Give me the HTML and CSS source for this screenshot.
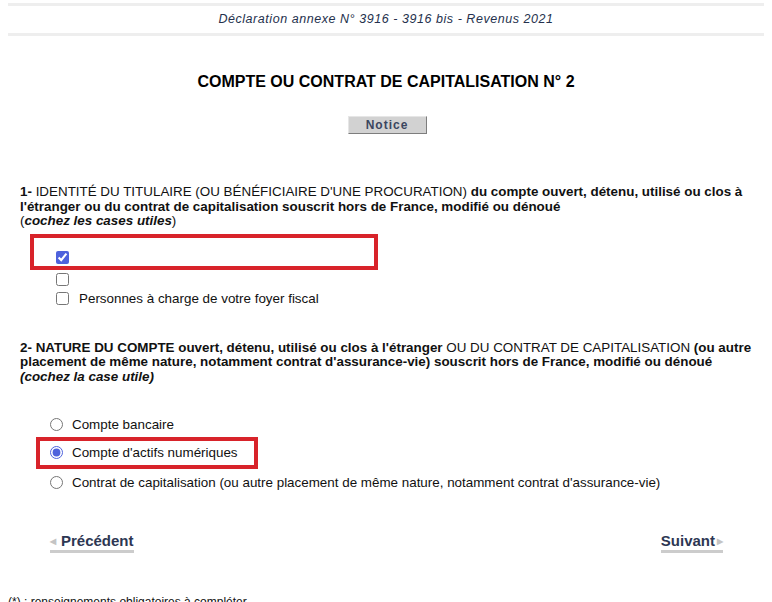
FILE: index.html
```html
<!DOCTYPE html>
<html lang="fr">
<head>
    <meta charset="UTF-8">
    <title>Déclaration annexe 3916</title>
    <link rel="stylesheet" href="styles.css">
</head>
<body>
    <div class="banner">Déclaration annexe N° 3916 - 3916 bis - Revenus 2021</div>

    <h1 class="title">COMPTE OU CONTRAT DE CAPITALISATION N° 2</h1>

    <div class="notice-wrap">
        <button class="notice">Notice</button>
    </div>

    <div class="section">
        <p class="question">
            <b>1-</b> IDENTITÉ DU TITULAIRE (OU BÉNÉFICIAIRE D'UNE PROCURATION) <b>du compte ouvert, détenu, utilisé ou clos à l'étranger ou du contrat de capitalisation souscrit hors de France, modifié ou dénoué</b><br>
            (<b><i>cochez les cases utiles</i></b>)
        </p>
        <div class="checks">
            <div class="highlight hl-check">
                <label class="row"><input type="checkbox" checked></label>
            </div>
            <label class="row"><input type="checkbox"></label>
            <label class="row"><input type="checkbox"> Personnes à charge de votre foyer fiscal</label>
        </div>
    </div>

    <div class="section section-2">
        <p class="question">
            <b>2- NATURE DU COMPTE ouvert, détenu, utilisé ou clos à l'étranger</b> OU DU CONTRAT DE CAPITALISATION <b>(ou autre placement de même nature, notamment contrat d'assurance-vie) souscrit hors de France, modifié ou dénoué</b><br>
            <b><i>(cochez la case utile)</i></b>
        </p>
        <div class="radios">
            <label class="row"><input type="radio" name="nature"> Compte bancaire</label>
            <div class="highlight hl-radio">
                <label class="row"><input type="radio" name="nature" checked> Compte d'actifs numériques</label>
            </div>
            <label class="row"><input type="radio" name="nature"> Contrat de capitalisation (ou autre placement de même nature, notamment contrat d'assurance-vie)</label>
        </div>
    </div>

    <div class="nav">
        <a href="#" class="nav-link prev"><span class="arrow">&#9664;</span>Précédent</a>
        <a href="#" class="nav-link next">Suivant<span class="arrow">&#9654;</span></a>
    </div>

    <p class="footnote">(*) : renseignements obligatoires à compléter</p>
</body>
</html>
```

FILE: styles.css
```css
body {
    font-family: "Liberation Sans", Arial, sans-serif;
    font-size: 13.4px;
    color: #111;
    margin: 0;
    padding: 0 8px;
    background-color: #fff;
}
.banner {
    margin-top: 3px;
    border-top: 3px solid #eeeeee;
    border-bottom: 3px solid #eeeeee;
    height: 27px;
    line-height: 27px;
    text-align: center;
    font-size: 12.5px;
    font-style: italic;
    letter-spacing: 0.55px;
    color: #25314d;
}
.title {
    margin: 36px 0 0;
    text-align: center;
    font-size: 16px;
    font-weight: bold;
    color: #000;
    line-height: 19px;
}
.notice-wrap {
    text-align: center;
    margin-top: 25px;
    padding-left: 2px;
}
.notice {
    width: 79px;
    height: 18px;
    padding: 0;
    font-family: inherit;
    font-size: 12px;
    font-weight: bold;
    letter-spacing: 1px;
    color: #3b465f;
    background-color: #d2d2d2;
    border: 1px solid #e6e6e6;
    border-right-color: #7d7d7d;
    border-bottom-color: #7d7d7d;
    cursor: pointer;
}
.section {
    padding-left: 12px;
    margin-top: 51px;
}
.section-2 {
    margin-top: 33px;
}
.question {
    margin: 0;
    line-height: 14.6px;
}
.checks {
    padding-left: 36px;
    margin-top: 5px;
}
.radios {
    padding-left: 30px;
    margin-top: 28px;
}
.row {
    display: flex;
    align-items: center;
    height: 20px;
}
.row input {
    margin: 0 10px 0 0;
    accent-color: #4e62dc;
}
.checks .row input {
    width: 13px;
    height: 13px;
}
.checks .row {
    height: 19px;
}
.radios .row {
    height: 28px;
}
.radios .row input {
    width: 13px;
    height: 13px;
    margin-right: 9px;
}
.highlight {
    border: 4px solid #d8232a;
}
.hl-check {
    width: 318px;
    margin-left: -26px;
    padding: 11px 0 0 22px;
}
.checks .hl-check .row {
    height: 17px;
}
.hl-radio {
    width: 204px;
    margin-left: -14px;
    padding-left: 10px;
}
.radios .hl-radio .row {
    height: 26px;
}
.radios .row:first-child {
    height: 24px;
}
.nav {
    display: flex;
    justify-content: space-between;
    padding: 0 41px 0 42px;
    margin-top: 35px;
}
.nav-link {
    font-size: 15px;
    font-weight: bold;
    color: #2d3753;
    text-decoration: none;
    border-bottom: 3px solid #cccccc;
    line-height: 17px;
    padding-bottom: 0;
}
.arrow {
    font-size: 8px;
    color: #c4c4c4;
    vertical-align: 2px;
}
.prev .arrow {
    margin-right: 5px;
}
.next .arrow {
    margin-left: 2px;
}
.footnote {
    margin: 42px 0 0;
    font-size: 12px;
}
```
